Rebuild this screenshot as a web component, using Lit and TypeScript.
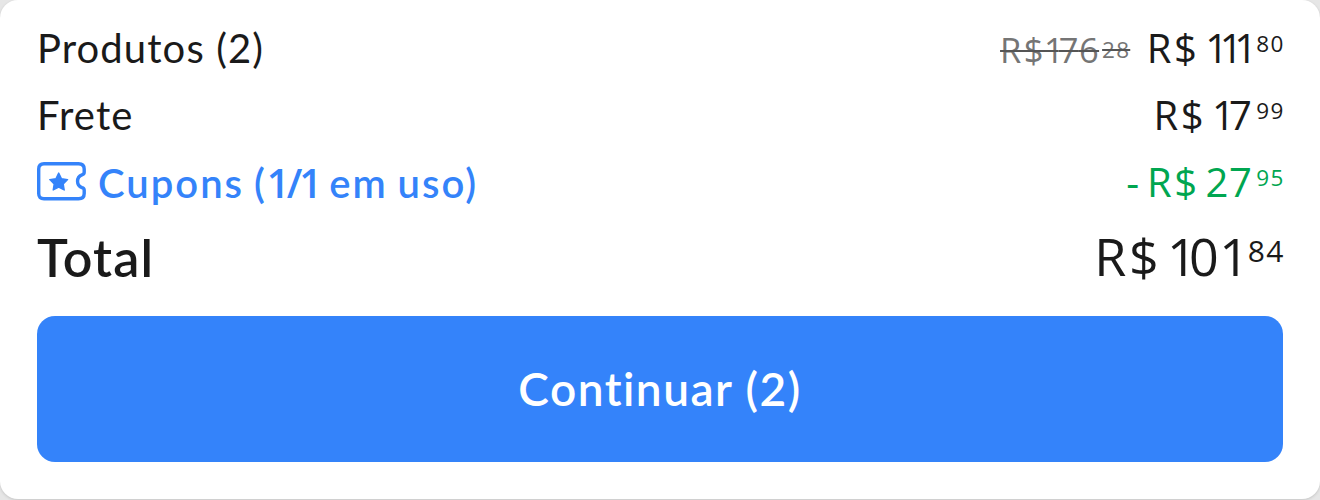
import {LitElement, html, css} from 'lit';
import {customElement, property} from 'lit/decorators.js';
import {classMap} from 'lit/directives/class-map.js';

@customElement('price-tag')
export class PriceTag extends LitElement {
  @property() sign = '';
  @property() amount = '';
  @property() cents = '';

  static styles = css`
    :host {
      display: block;
      padding-bottom: 2px;
      white-space: nowrap;
      font-family: "Open Sans", sans-serif;
    }

    .sign {
      margin-right: var(--sign-gap, 8px);
    }

    .currency {
      letter-spacing: 2.5px;
    }

    .amount {
      margin-left: var(--amount-gap, 6px);
      letter-spacing: 0.5px;
    }

    .one {
      letter-spacing: -0.15em;
    }

    .one.pair {
      letter-spacing: -0.21em;
    }

    .one.last {
      letter-spacing: -0.12em;
    }

    .cents {
      display: inline-block;
      margin-left: var(--cents-gap, 4px);
      margin-right: -1.5px;
      font-size: var(--cents-size, 22.5px);
      letter-spacing: 1.2px;
      vertical-align: var(--cents-rise, 11px);
      line-height: 0;
      text-decoration: inherit;
    }
  `;

  render() {
    const digits = [...this.amount].map((d, i, all) => {
      if (d !== '1') return d;
      const classes = {one: true, pair: all[i + 1] === '1', last: i === all.length - 1};
      return html`<span class=${classMap(classes)}>1</span>`;
    });
    return html`${this.sign ? html`<span class="sign">${this.sign}</span>` : ''}<span class="currency">R$</span><span class="amount">${digits}</span><span class="cents">${this.cents}</span>`;
  }
}

@customElement('app-root')
export class AppRoot extends LitElement {
  static styles = css`
    :host {
      display: block;
      height: 500px;
      overflow: hidden;
      background: #e6e6e6;
      font-family: Lato, "Open Sans", sans-serif;
      color: #1a1a1a;
    }

    .card {
      box-sizing: border-box;
      height: 499px;
      padding: 15px 37px 0;
      border-radius: 18px;
      background: #fff;
      box-shadow: 0 1px 3px rgba(0, 0, 0, 0.15);
    }

    .row {
      display: flex;
      align-items: center;
      justify-content: space-between;
      height: 67px;
      font-size: 40px;
      line-height: 67px;
      white-space: nowrap;
    }

    .label {
      letter-spacing: 1.1px;
    }

    .prices {
      display: flex;
      align-items: center;
      gap: 18px;
    }

    .old {
      padding: 1px 0 0;
      color: #757575;
      font-size: 34.5px;
      text-decoration: line-through #555 2px;
      --amount-gap: -2px;
      --cents-gap: 3px;
      --cents-rise: 5px;
    }

    .coupon {
      display: flex;
      align-items: center;
      gap: 11px;
      color: #3483fa;
      font-weight: 600;
    }

    .coupon .label {
      letter-spacing: 2px;
      word-spacing: -2px;
    }

    .figures {
      font-family: "Open Sans", sans-serif;
      letter-spacing: -3px;
    }

    .ticket {
      display: block;
      width: 50px;
      height: 40px;
      margin-bottom: 3px;
    }

    .discount {
      color: #00a650;
    }

    .total {
      height: 82px;
      font-size: 52px;
      line-height: 82px;
    }

    .total .label {
      font-weight: 600;
    }

    .total price-tag {
      --cents-size: 30px;
      --cents-rise: 14px;
      --cents-gap: 5px;
    }

    .button {
      display: block;
      width: 100%;
      height: 146px;
      margin-top: 18px;
      padding: 0;
      border: 0;
      border-radius: 18px;
      background: #3483fa;
      color: #fff;
      font: 600 46px/146px Lato, "Open Sans", sans-serif;
      letter-spacing: 1.5px;
    }
  `;

  render() {
    return html`
      <div class="card">
        <div class="row">
          <span class="label">Produtos (2)</span>
          <div class="prices">
            <price-tag class="old" amount="176" cents="28"></price-tag>
            <price-tag amount="111" cents="80"></price-tag>
          </div>
        </div>
        <div class="row">
          <span class="label">Frete</span>
          <price-tag amount="17" cents="99"></price-tag>
        </div>
        <div class="row">
          <span class="coupon">
            <svg class="ticket" viewBox="0 0 50 40" fill="none">
              <path d="M7 2.7H41.5Q47.2 2.7 47.2 8V11.3Q47.2 13.2 45 13.8A6.9 6.9 0 0 0 45 26.7Q47.2 27.3 47.2 29.2V32.5Q47.2 37.8 41.5 37.8H7Q1.7 37.8 1.7 32.5V8Q1.7 2.7 7 2.7Z" stroke="currentColor" stroke-width="3.4"/>
              <path d="M21.7 12.1l2.8 5.6 6.1.9-4.4 4.3 1 6.1-5.5-2.9-5.5 2.9 1-6.1-4.4-4.3 6.1-.9z" fill="currentColor" stroke="currentColor" stroke-width="1.4" stroke-linejoin="round"/>
            </svg>
            <span class="label">Cupons (<span class="figures">1/1</span> em uso)</span>
          </span>
          <price-tag class="discount" sign="-" amount="27" cents="95"></price-tag>
        </div>
        <div class="row total">
          <span class="label">Total</span>
          <price-tag amount="101" cents="84"></price-tag>
        </div>
        <button class="button">Continuar (2)</button>
      </div>
    `;
  }
}
